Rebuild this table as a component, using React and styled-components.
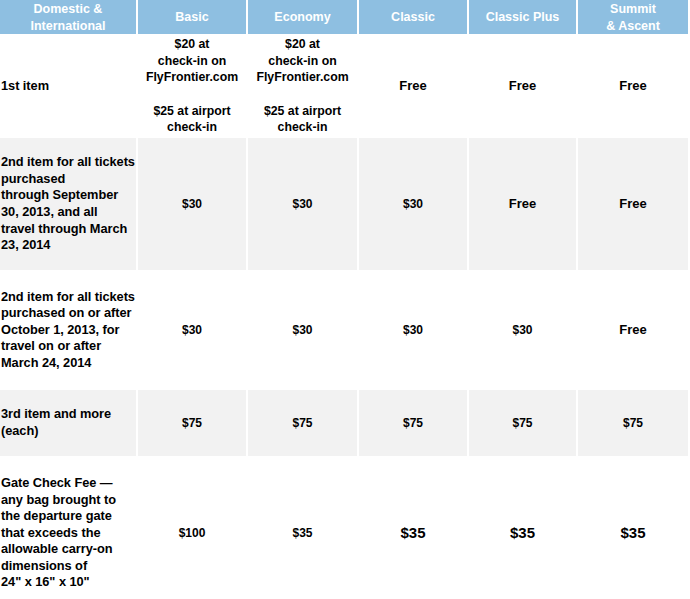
import React from "react";
import styled, { createGlobalStyle } from "styled-components";

const Global = createGlobalStyle`
  body {
    margin: 0;
    background: #fff;
    font-family: "Liberation Sans", Arial, sans-serif;
    color: #000;
  }
`;

const Grid = styled.div`
  display: grid;
  grid-template-columns: 136px 108px 109px 108px 107px 110px;
  grid-template-rows: 34px 100px 132px 116px 66px 150px;
  gap: 2px;
  width: 688px;
`;

const Head = styled.div`
  background: #8ebfe1;
  color: #fff;
  font-weight: bold;
  font-size: 12.5px;
  line-height: 17px;
  padding-top: 1px;
  display: flex;
  align-items: center;
  justify-content: center;
  text-align: center;
  white-space: pre;
`;

const Cell = styled.div`
  background: ${(p) => (p.$shade ? "#f2f2f2" : "#fff")};
  font-weight: bold;
  font-size: ${(p) => p.$size || 12}px;
  line-height: 16.6px;
  display: flex;
  align-items: center;
  justify-content: ${(p) => (p.$left ? "flex-start" : "center")};
  text-align: ${(p) => (p.$left ? "left" : "center")};
  padding-left: ${(p) => (p.$left ? "1px" : "0")};
  letter-spacing: ${(p) => (p.$left ? "-0.05px" : "0")};
  white-space: pre;
`;

const headers = [
  "Domestic &\nInternational",
  "Basic",
  "Economy",
  "Classic",
  "Classic Plus",
  "Summit\n& Ascent",
];

const firstItem = "$20 at\ncheck-in on\nFlyFrontier.com\n\n$25 at airport\ncheck-in";

const rows = [
  {
    label: "1st item",
    cells: [
      [firstItem, 12.3],
      [firstItem, 12.3],
      ["Free", 13],
      ["Free", 13],
      ["Free", 13],
    ],
  },
  {
    label:
      "2nd item for all tickets\npurchased\nthrough September\n30, 2013, and all\ntravel through March\n23, 2014",
    shade: true,
    cells: [
      ["$30"],
      ["$30"],
      ["$30"],
      ["Free", 13],
      ["Free", 13],
    ],
  },
  {
    label:
      "2nd item for all tickets\npurchased on or after\nOctober 1, 2013, for\ntravel on or after\nMarch 24, 2014",
    cells: [["$30"], ["$30"], ["$30"], ["$30"], ["Free", 13]],
  },
  {
    label: "3rd item and more\n(each)",
    shade: true,
    cells: [["$75"], ["$75"], ["$75"], ["$75"], ["$75"]],
  },
  {
    label:
      "Gate Check Fee —\nany bag brought to\nthe departure gate\nthat exceeds the\nallowable carry-on\ndimensions of\n24\" x 16\" x 10\"",
    cells: [["$100"], ["$35"], ["$35", 15], ["$35", 15], ["$35", 15]],
  },
];

export default function App() {
  return (
    <>
      <Global />
      <Grid>
        {headers.map((h) => (
          <Head key={h}>{h}</Head>
        ))}
        {rows.map((r, i) => (
          <React.Fragment key={i}>
            <Cell $left $shade={r.shade} $size={12.8}>
              {r.label}
            </Cell>
            {r.cells.map(([text, size], j) => (
              <Cell key={j} $shade={r.shade} $size={size}>
                {text}
              </Cell>
            ))}
          </React.Fragment>
        ))}
      </Grid>
    </>
  );
}
